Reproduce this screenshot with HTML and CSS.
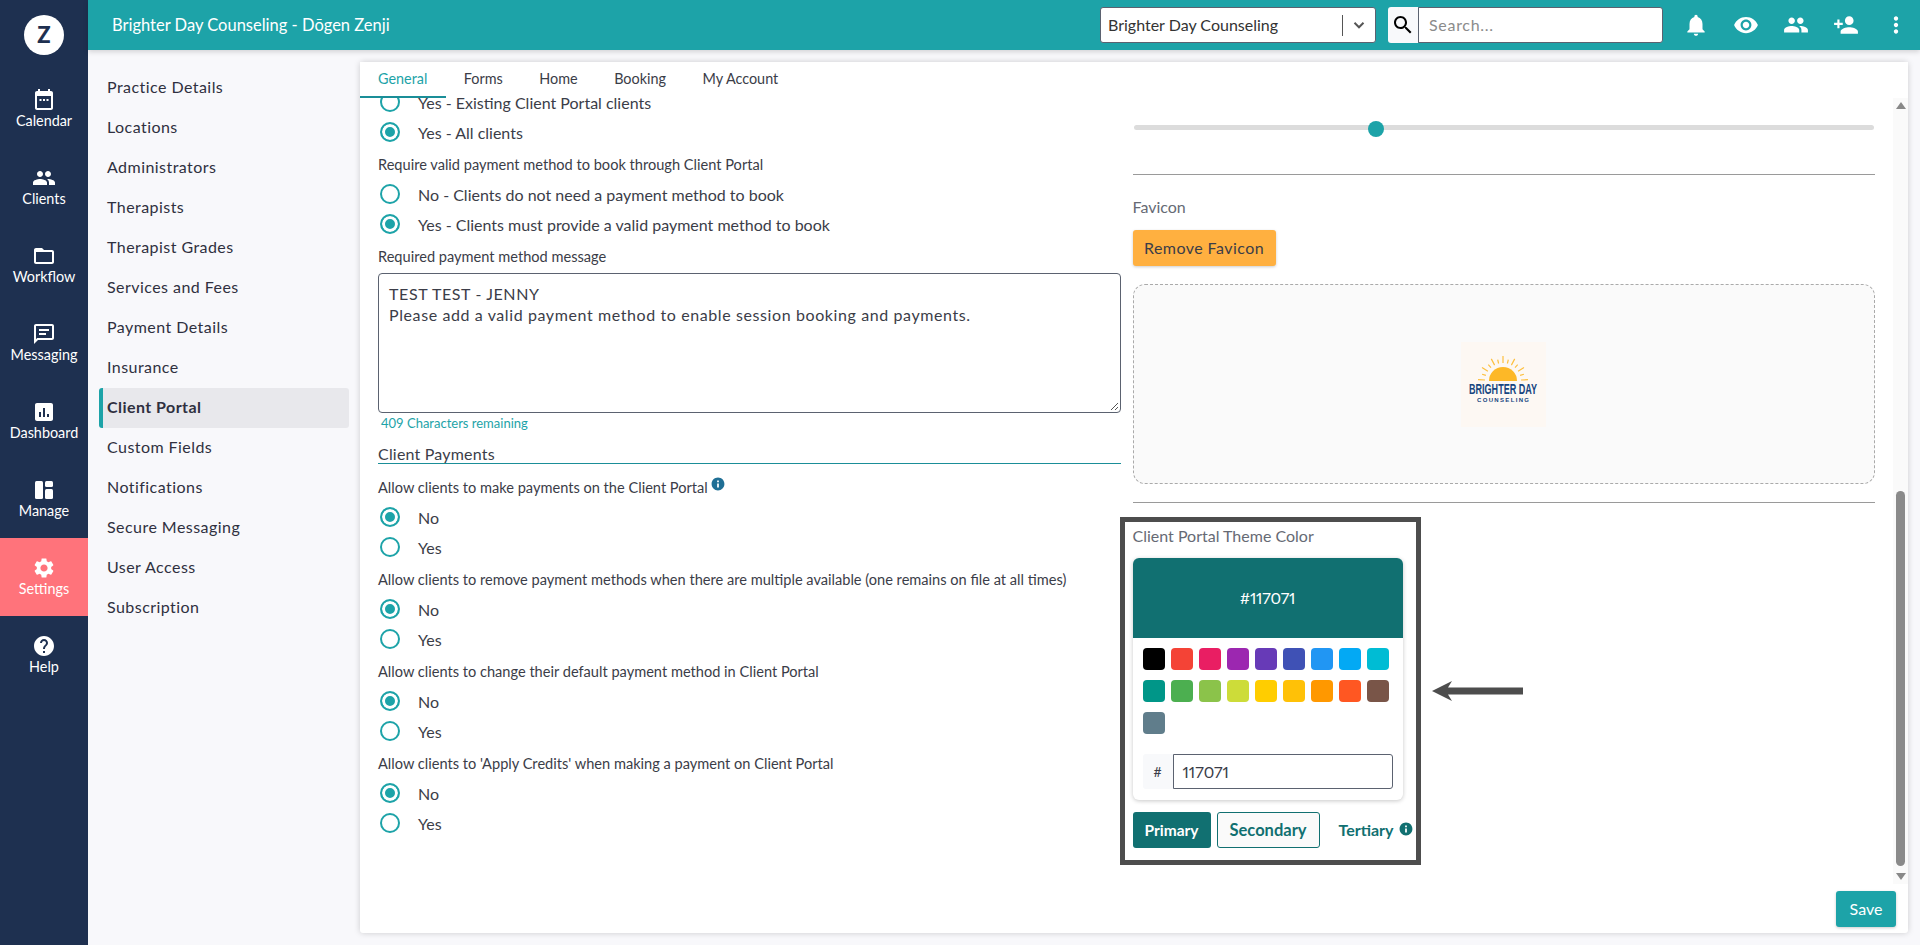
FILE: index.html
```html
<!DOCTYPE html>
<html>
<head>
  <title>Client Portal Settings</title>
  <link rel="stylesheet" href="styles.css">
</head>
<body>
  <nav class="rail">
    <div class="rail-logo"><span>Z</span></div>
    <a class="rail-item">
      <svg viewBox="0 0 24 24"><path d="M19 3h-1V1h-2v2H8V1H6v2H5c-1.1 0-2 .9-2 2v15c0 1.1.9 2 2 2h14c1.1 0 2-.9 2-2V5c0-1.1-.9-2-2-2zm0 17H5V8h14v12zM7.5 11h2v2h-2zm3.5 0h2v2h-2zm3.5 0h2v2h-2z"/></svg>
      Calendar
    </a>
    <a class="rail-item">
      <svg viewBox="0 0 24 24"><path d="M16 11c1.66 0 2.99-1.34 2.99-3S17.66 5 16 5c-1.66 0-3 1.34-3 3s1.34 3 3 3zm-8 0c1.66 0 2.99-1.34 2.99-3S9.66 5 8 5C6.34 5 5 6.34 5 8s1.34 3 3 3zm0 2c-2.33 0-7 1.17-7 3.5V19h14v-2.5c0-2.33-4.67-3.5-7-3.5zm8 0c-.29 0-.62.02-.97.05 1.16.84 1.97 1.97 1.97 3.45V19h6v-2.5c0-2.33-4.67-3.5-7-3.5z"/></svg>
      Clients
    </a>
    <a class="rail-item">
      <svg viewBox="0 0 24 24"><path d="M20 6h-8l-2-2H4c-1.1 0-1.99.9-1.99 2L2 18c0 1.1.9 2 2 2h16c1.1 0 2-.9 2-2V8c0-1.1-.9-2-2-2zm0 12H4V8h16v10z"/></svg>
      Workflow
    </a>
    <a class="rail-item">
      <svg viewBox="0 0 24 24"><path d="M20 2H4c-1.1 0-1.99.9-1.99 2L2 22l4-4h14c1.1 0 2-.9 2-2V4c0-1.1-.9-2-2-2zm0 14H5.17L4 17.17V4h16v12zM7 7h10v2H7zm0 4h7v2H7z"/></svg>
      Messaging
    </a>
    <a class="rail-item">
      <svg viewBox="0 0 24 24"><path d="M19 3H5c-1.1 0-2 .9-2 2v14c0 1.1.9 2 2 2h14c1.1 0 2-.9 2-2V5c0-1.1-.9-2-2-2zM9 17H7v-5h2v5zm4 0h-2V8h2v9zm4 0h-2v-3h2v3z"/></svg>
      Dashboard
    </a>
    <a class="rail-item">
      <svg viewBox="0 0 24 24"><rect x="3" y="3" width="8" height="18" rx="1.5"/><rect x="13" y="3" width="8" height="6" rx="1.5"/><rect x="13" y="11" width="8" height="10" rx="1.5"/></svg>
      Manage
    </a>
    <a class="rail-item rail-active">
      <svg viewBox="0 0 24 24"><path d="M19.14 12.94c.04-.3.06-.61.06-.94 0-.32-.02-.64-.07-.94l2.03-1.58c.18-.14.23-.41.12-.61l-1.92-3.32c-.12-.22-.37-.29-.59-.22l-2.39.96c-.5-.38-1.03-.7-1.62-.94l-.36-2.54c-.04-.24-.24-.41-.48-.41h-3.84c-.24 0-.43.17-.47.41l-.36 2.54c-.59.24-1.13.57-1.62.94l-2.39-.96c-.22-.08-.47 0-.59.22L2.74 8.87c-.12.21-.08.47.12.61l2.03 1.58c-.05.3-.09.63-.09.94s.02.64.07.94l-2.03 1.58c-.18.14-.23.41-.12.61l1.92 3.32c.12.22.37.29.59.22l2.39-.96c.5.38 1.03.7 1.62.94l.36 2.54c.05.24.24.41.48.41h3.84c.24 0 .44-.17.47-.41l.36-2.54c.59-.24 1.13-.56 1.62-.94l2.39.96c.22.08.47 0 .59-.22l1.92-3.32c.12-.22.07-.47-.12-.61l-2.01-1.58zM12 15.6c-1.98 0-3.6-1.62-3.6-3.6s1.62-3.6 3.6-3.6 3.6 1.62 3.6 3.6-1.62 3.6-3.6 3.6z"/></svg>
      Settings
    </a>
    <a class="rail-item">
      <svg viewBox="0 0 24 24"><path d="M12 2C6.48 2 2 6.48 2 12s4.48 10 10 10 10-4.48 10-10S17.52 2 12 2zm1 17h-2v-2h2v2zm2.07-7.75l-.9.92C13.45 12.9 13 13.5 13 15h-2v-.5c0-1.1.45-2.1 1.17-2.83l1.24-1.26c.37-.36.59-.86.59-1.41 0-1.1-.9-2-2-2s-2 .9-2 2H8c0-2.21 1.79-4 4-4s4 1.79 4 4c0 .88-.36 1.68-.93 2.25z"/></svg>
      Help
    </a>
  </nav>

  <div class="page">
    <header class="topbar">
      <div class="topbar-title">Brighter Day Counseling - Dōgen Zenji</div>
      <div class="practice-select">
        <span class="practice-name">Brighter Day Counseling</span>
        <span class="practice-sep"></span>
        <svg class="practice-caret" viewBox="0 0 24 24"><path d="M6 9l6 6 6-6" /></svg>
      </div>
      <div class="search">
        <span class="search-addon">
          <svg viewBox="0 0 24 24"><path d="M15.5 14h-.79l-.28-.27C15.41 12.59 16 11.11 16 9.5 16 5.91 13.09 3 9.5 3S3 5.91 3 9.5 5.91 16 9.5 16c1.61 0 3.09-.59 4.23-1.57l.27.28v.79l5 4.99L20.49 19l-4.99-5zm-6 0C7.01 14 5 11.99 5 9.5S7.01 5 9.5 5 14 7.01 14 9.5 11.99 14 9.5 14z"/></svg>
        </span>
        <span class="search-input">Search...</span>
      </div>
      <div class="top-icons">
        <svg viewBox="0 0 24 24"><path d="M12 22c1.1 0 2-.9 2-2h-4c0 1.1.9 2 2 2zm6-6v-5c0-3.07-1.64-5.64-4.5-6.32V4c0-.83-.67-1.5-1.5-1.5s-1.5.67-1.5 1.5v.68C7.63 5.36 6 7.92 6 11v5l-2 2v1h16v-1l-2-2z"/></svg>
        <svg viewBox="0 0 24 24"><path d="M12 4.5C7 4.5 2.73 7.61 1 12c1.73 4.39 6 7.5 11 7.5s9.27-3.11 11-7.5c-1.73-4.39-6-7.5-11-7.5zM12 17c-2.76 0-5-2.24-5-5s2.24-5 5-5 5 2.24 5 5-2.24 5-5 5zm0-8c-1.66 0-3 1.34-3 3s1.34 3 3 3 3-1.34 3-3-1.34-3-3-3z"/></svg>
        <svg viewBox="0 0 24 24"><path d="M16 11c1.66 0 2.99-1.34 2.99-3S17.66 5 16 5c-1.66 0-3 1.34-3 3s1.34 3 3 3zm-8 0c1.66 0 2.99-1.34 2.99-3S9.66 5 8 5C6.34 5 5 6.34 5 8s1.34 3 3 3zm0 2c-2.33 0-7 1.17-7 3.5V19h14v-2.5c0-2.33-4.67-3.5-7-3.5zm8 0c-.29 0-.62.02-.97.05 1.16.84 1.97 1.97 1.97 3.45V19h6v-2.5c0-2.33-4.67-3.5-7-3.5z"/></svg>
        <svg viewBox="0 0 24 24"><path d="M15 12c2.21 0 4-1.79 4-4s-1.79-4-4-4-4 1.79-4 4 1.79 4 4 4zm-9-2V7H4v3H1v2h3v3h2v-3h3v-2H6zm9 4c-2.67 0-8 1.34-8 4v2h16v-2c0-2.66-5.33-4-8-4z"/></svg>
        <svg viewBox="0 0 24 24"><path d="M12 8c1.1 0 2-.9 2-2s-.9-2-2-2-2 .9-2 2 .9 2 2 2zm0 2c-1.1 0-2 .9-2 2s.9 2 2 2 2-.9 2-2-.9-2-2-2zm0 6c-1.1 0-2 .9-2 2s.9 2 2 2 2-.9 2-2-.9-2-2-2z"/></svg>
      </div>
    </header>

    <div class="body-row">
      <aside class="subnav">
        <a>Practice Details</a>
        <a>Locations</a>
        <a>Administrators</a>
        <a>Therapists</a>
        <a>Therapist Grades</a>
        <a>Services and Fees</a>
        <a>Payment Details</a>
        <a>Insurance</a>
        <a class="subnav-active">Client Portal</a>
        <a>Custom Fields</a>
        <a>Notifications</a>
        <a>Secure Messaging</a>
        <a>User Access</a>
        <a>Subscription</a>
      </aside>

      <main class="card">
        <div class="tabs">
          <a class="tab tab-active">General</a>
          <a class="tab">Forms</a>
          <a class="tab">Home</a>
          <a class="tab">Booking</a>
          <a class="tab">My Account</a>
        </div>

        <div class="scroll-area">
          <div class="columns">
            <section class="col col-left">
              <div class="radio"><i></i>Yes - Existing Client Portal clients</div>
              <div class="radio on"><i></i>Yes - All clients</div>

              <div class="field-label label-tight">Require valid payment method to book through Client Portal</div>
              <div class="radio"><i></i>No - Clients do not need a payment method to book</div>
              <div class="radio on"><i></i>Yes - Clients must provide a valid payment method to book</div>

              <div class="field-label label-message">Required payment method message</div>
              <div class="textarea">TEST TEST - JENNY<br>Please add a valid payment method to enable session booking and payments.
                <svg class="resize-grip" viewBox="0 0 10 10"><path d="M9 2L2 9M9 6L6 9" /></svg>
              </div>
              <div class="char-count">409 Characters remaining</div>

              <h3 class="section-head">Client Payments</h3>

              <div class="field-label">Allow clients to make payments on the Client Portal
                <svg class="info-sup" viewBox="0 0 24 24"><path d="M12 1C5.9 1 1 5.9 1 12s4.9 11 11 11 11-4.9 11-11S18.1 1 12 1zm1.5 17h-3v-7h3v7zm0-9h-3V6h3v3z"/></svg>
              </div>
              <div class="radio on"><i></i>No</div>
              <div class="radio"><i></i>Yes</div>

              <div class="field-label">Allow clients to remove payment methods when there are multiple available (one remains on file at all times)</div>
              <div class="radio on"><i></i>No</div>
              <div class="radio"><i></i>Yes</div>

              <div class="field-label">Allow clients to change their default payment method in Client Portal</div>
              <div class="radio on"><i></i>No</div>
              <div class="radio"><i></i>Yes</div>

              <div class="field-label">Allow clients to 'Apply Credits' when making a payment on Client Portal</div>
              <div class="radio on"><i></i>No</div>
              <div class="radio"><i></i>Yes</div>
            </section>

            <section class="col col-right">
              <div class="slider"><span class="slider-thumb" style="left: 32.7%"></span></div>
              <hr class="rule rule-top">
              <div class="muted-label">Favicon</div>
              <button class="btn-warn">Remove Favicon</button>
              <div class="dropzone">
                <svg class="favicon" viewBox="0 0 85 85">
                  <rect width="85" height="85" fill="#fdf8f3" />
                  <path class="sun" d="M28 39a14 14 0 0 1 28 0z" />
                  <path class="rays" d="M60 38L67 37.7M24 38L17 37.7M59.1 33.4L62.9 32.2M24.9 33.4L21.1 32.2M57.1 29.2L63 25.4M26.9 29.2L21 25.4M54 25.6L56.7 22.7M30 25.6L27.3 22.7M50.4 23.1L53.7 16.9M33.6 23.1L30.3 16.9M46.4 21.5L47.3 17.7M37.6 21.5L36.7 17.7M42 21L42 14" />
                  <text class="logo-big" x="8" y="52" textLength="68" lengthAdjust="spacingAndGlyphs">BRIGHTER DAY</text>
                  <text class="logo-small" x="16" y="60" textLength="52" lengthAdjust="spacing">COUNSELING</text>
                </svg>
              </div>
              <hr class="rule rule-bottom">
              <div class="muted-label theme-label">Client Portal Theme Color</div>
              <div class="picker">
                <div class="picker-head">#117071</div>
                <div class="swatches">
                  <span style="background: #000000"></span>
                  <span style="background: #f44336"></span>
                  <span style="background: #e91e63"></span>
                  <span style="background: #9c27b0"></span>
                  <span style="background: #673ab7"></span>
                  <span style="background: #3f51b5"></span>
                  <span style="background: #2196f3"></span>
                  <span style="background: #03a9f4"></span>
                  <span style="background: #00bcd4"></span>
                  <span style="background: #009688"></span>
                  <span style="background: #4caf50"></span>
                  <span style="background: #8bc34a"></span>
                  <span style="background: #cddc39"></span>
                  <span style="background: #ffcd00"></span>
                  <span style="background: #ffc107"></span>
                  <span style="background: #ff9800"></span>
                  <span style="background: #ff5722"></span>
                  <span style="background: #795548"></span>
                  <span style="background: #607d8b"></span>
                </div>
                <div class="hex-row">
                  <span class="hex-addon">#</span>
                  <span class="hex-input">117071</span>
                </div>
              </div>
              <div class="theme-btns">
                <button class="theme-btn theme-primary">Primary</button>
                <button class="theme-btn theme-secondary">Secondary</button>
                <span class="theme-tertiary">Tertiary
                  <svg viewBox="0 0 24 24"><path d="M12 1C5.9 1 1 5.9 1 12s4.9 11 11 11 11-4.9 11-11S18.1 1 12 1zm1.5 17h-3v-7h3v7zm0-9h-3V6h3v3z"/></svg>
                </span>
              </div>
            </section>
          </div>

          <div class="scrollbar">
            <span class="arrow-up"></span>
            <span class="scroll-thumb"></span>
            <span class="arrow-down"></span>
          </div>
        </div>

        <footer class="card-foot">
          <button class="btn-save">Save</button>
        </footer>
      </main>
    </div>
  </div>

  <!-- annotation drawn over the screenshot -->
  <div class="note-frame"></div>
  <svg class="note-arrow" viewBox="0 0 91 20"><path d="M0 10L20 0L16 6.5H91V13.5H16L20 20z"/></svg>
</body>
</html>
```

FILE: styles.css
```css
* {
  box-sizing: border-box;
}
html, body {
  width: 100%;
  height: 100%;
  margin: 0;
  padding: 0;
  overflow: hidden;
}
body {
  display: flex;
  position: relative;
  font-family: "Lato", "Liberation Sans", sans-serif;
  font-size: 16px;
  color: #3b3d48;
  background: #f8f8fb;
}

/* left rail */
.rail {
  width: 88px;
  flex: none;
  background: #1e3050;
  color: #fff;
}
.rail-logo {
  height: 70px;
  display: flex;
  align-items: center;
  justify-content: center;
}
.rail-logo span {
  width: 40px;
  height: 40px;
  border-radius: 50%;
  background: #fff;
  color: #1e3050;
  font-size: 22px;
  font-weight: 900;
  text-align: center;
  line-height: 40px;
}
.rail-item {
  display: flex;
  flex-direction: column;
  align-items: center;
  height: 78px;
  padding-top: 18px;
  font-size: 14.4px;
  line-height: 18px;
}
.rail-item svg {
  width: 24px;
  height: 24px;
  fill: #fff;
}
.rail-active {
  background: #ff737b;
}

/* top bar */
.page {
  flex: 1;
  display: flex;
  flex-direction: column;
  min-width: 0;
}
.topbar {
  height: 50px;
  flex: none;
  display: flex;
  align-items: center;
  padding: 0 11px 0 24px;
  background: #1da3a8;
  color: #fff;
  box-shadow: 0 2px 5px rgba(0, 0, 0, 0.15);
  position: relative;
  z-index: 2;
}
.topbar-title {
  flex: 1;
  font-size: 16.5px;
}
.practice-select {
  width: 276px;
  height: 36px;
  display: flex;
  align-items: center;
  padding-left: 7px;
  background: #fff;
  border: 1px solid #5b6270;
  border-radius: 3px;
  color: #333;
  font-size: 16px;
}
.practice-name {
  flex: 1;
  margin-top: -2px;
}
.practice-sep {
  width: 1px;
  height: 21px;
  background: #555;
}
.practice-caret {
  width: 18px;
  height: 18px;
  margin: 0 7px;
  fill: none;
  stroke: #555;
  stroke-width: 2.6;
}
.search {
  display: flex;
  height: 36px;
  margin-left: 12px;
}
.search-addon {
  width: 30px;
  display: flex;
  align-items: center;
  justify-content: center;
  background: #f8f9fb;
  border-radius: 3px 0 0 3px;
}
.search-addon svg {
  width: 24px;
  height: 24px;
}
.search-input {
  width: 245px;
  padding-left: 10px;
  background: #fff;
  border: 1px solid #5b6270;
  border-radius: 0 3px 3px 0;
  color: #8b8b8b;
  line-height: 34px;
  letter-spacing: 0.7px;
}
.top-icons {
  display: flex;
  margin-left: 20px;
  gap: 24px;
}
.top-icons svg {
  width: 26px;
  height: 26px;
  fill: #fff;
}

/* settings list */
.body-row {
  flex: 1;
  display: flex;
  min-height: 0;
}
.subnav {
  width: 272px;
  flex: none;
  padding: 18px 0 0 11px;
}
.subnav a {
  display: block;
  width: 250px;
  height: 40px;
  padding-left: 8px;
  line-height: 38px;
  font-size: 16px;
  letter-spacing: 0.45px;
  color: #2f3040;
}
.subnav .subnav-active {
  background: #e8e8ec;
  border-left: 4px solid #1da3a8;
  border-radius: 3px;
  padding-left: 4px;
  font-weight: 700;
}

/* main card */
.card {
  flex: 1;
  margin: 12px 12px 12px 0;
  display: flex;
  flex-direction: column;
  background: #fff;
  border-radius: 3px;
  box-shadow: 0 0 6px rgba(0, 0, 0, 0.18);
  min-width: 0;
}
.tabs {
  height: 36px;
  flex: none;
  display: flex;
  position: relative;
  z-index: 1;
  background: #fff;
}
.tab {
  padding: 0 18.5px 0 18px;
  line-height: 34px;
  font-size: 14.4px;
  color: #3b3d48;
}
.tab-active {
  color: #1da3a8;
  border-bottom: 2px solid #1a8e98;
}
.scroll-area {
  flex: 1;
  display: flex;
  min-height: 0;
  overflow: hidden;
}
.columns {
  flex: 1;
  display: flex;
  gap: 12px;
  padding: 0 18px;
  min-width: 0;
}
.col {
  flex: 1;
  min-width: 0;
}
.col-left {
  margin-top: -11px; /* scrolled position */
}

.radio {
  height: 30px;
  display: flex;
  align-items: center;
  padding-left: 2px;
  font-size: 16px;
}
.radio i {
  width: 20px;
  height: 20px;
  margin-right: 18px;
  border: 2px solid #1da3a8;
  border-radius: 50%;
}
.radio.on i {
  background: #1da3a8;
  box-shadow: inset 0 0 0 3px #fff;
}
.field-label {
  height: 20px;
  margin: 8px 0 4px;
  font-size: 14.6px;
  line-height: 20px;
}
.field-label.label-message {
  margin: 8px 0 6px;
}
.info-sup {
  width: 14px;
  height: 14px;
  margin-top: -1px;
  fill: #1f6f95;
  vertical-align: top;
}
.textarea {
  position: relative;
  height: 140px;
  padding: 9px 10px;
  border: 1px solid #5b6270;
  border-radius: 4px;
  font-size: 16px;
  letter-spacing: 0.6px;
  line-height: 21px;
}
.resize-grip {
  position: absolute;
  right: 1px;
  bottom: 1px;
  width: 10px;
  height: 10px;
  fill: none;
  stroke: #555;
}
.char-count {
  padding: 2px 0 0 3px;
  font-size: 13px;
  line-height: 16px;
  color: #1da3a8;
}
.section-head {
  margin: 13px 0 14px;
  font-size: 16px;
  letter-spacing: 0.2px;
  font-weight: 400;
  line-height: 19px;
  border-bottom: 1px solid #1a8e98;
}

/* right column */
.slider {
  position: relative;
  height: 5px;
  margin: 27px 1px 44px;
  background: #dcdcdc;
  border-radius: 3px;
}
.slider-thumb {
  position: absolute;
  top: -4px;
  width: 16px;
  height: 16px;
  margin-left: -8px;
  background: #1da3a8;
  border-radius: 50%;
}
.rule {
  margin: 0;
  border: 0;
  border-top: 1px solid #9a9a9a;
}
.muted-label {
  font-size: 16px;
  line-height: 20px;
  color: #666a74;
}
.rule-top {
  margin-bottom: 22px;
}
.btn-warn {
  display: block;
  width: 143px;
  height: 36px;
  margin-top: 13px;
  padding: 0 0 2px;
  border: 0;
  border-radius: 3px;
  background: #ffb040;
  color: #3b3d48;
  font: 16px "Lato", "Liberation Sans", sans-serif;
  letter-spacing: 0.45px;
  box-shadow: 0 1px 3px rgba(0, 0, 0, 0.2);
}
.dropzone {
  height: 200px;
  margin-top: 18px;
  display: flex;
  align-items: center;
  justify-content: center;
  background: #fafafa;
  border: 1px dashed #aaa;
  border-radius: 12px;
}
.favicon {
  width: 85px;
  height: 85px;
}
.sun {
  fill: #fdb827;
}
.rays {
  fill: none;
  stroke: #fdc040;
  stroke-width: 1.2;
}
.logo-big {
  font: 700 14px "Liberation Sans", sans-serif;
  fill: #16457f;
}
.logo-small {
  font: 700 6px "Liberation Sans", sans-serif;
  fill: #16457f;
}
.rule-bottom {
  margin-top: 18px;
}
.theme-label {
  margin-top: 23px;
}
.picker {
  width: 270px;
  height: 242px;
  margin-top: 12px;
  background: #fff;
  border-radius: 6px;
  box-shadow: 0 1px 4px rgba(0, 0, 0, 0.22);
}
.picker-head {
  height: 80px;
  background: #117071;
  border-radius: 6px 6px 0 0;
  color: #fff;
  font-size: 16px;
  font-variant-numeric: proportional-nums;
  letter-spacing: -0.2px;
  line-height: 80px;
  text-align: center;
}
.swatches {
  display: flex;
  flex-wrap: wrap;
  align-content: flex-start;
  gap: 10px 6px;
  height: 116px;
  padding: 10px 10px 0;
}
.swatches span {
  width: 22px;
  height: 22px;
  border-radius: 4px;
}
.hex-row {
  display: flex;
  height: 35px;
  margin: 0 10px;
}
.hex-addon {
  width: 30px;
  background: #f8f9fb;
  border-radius: 3px 0 0 3px;
  line-height: 35px;
  text-align: center;
  font-size: 14px;
}
.hex-input {
  flex: 1;
  padding-left: 9px;
  border: 1px solid #5b6270;
  border-radius: 0 3px 3px 0;
  line-height: 33px;
  font-size: 16px;
  font-variant-numeric: proportional-nums;
}
.theme-btns {
  display: flex;
  align-items: center;
  gap: 6px;
  margin-top: 12px;
}
.theme-btn {
  height: 36px;
  padding: 0;
  border-radius: 3px;
  font: 700 15.5px "Lato", "Liberation Sans", sans-serif;
}
.theme-primary {
  width: 78px;
  border: 0;
  background: #117071;
  color: #fff;
}
.theme-secondary {
  width: 103px;
  border: 1px solid #117071;
  background: #fafafa;
  color: #117071;
  font-size: 16.5px;
}
.theme-tertiary {
  display: flex;
  align-items: center;
  gap: 5px;
  margin-left: 13px;
  margin-top: -2px;
  font-size: 16px;
  font-weight: 700;
  color: #117071;
}
.theme-tertiary svg {
  width: 14px;
  height: 14px;
  fill: #117071;
}

/* fake scrollbar */
.scrollbar {
  width: 15px;
  flex: none;
  display: flex;
  flex-direction: column;
  align-items: center;
  background: #fafafa;
}
.arrow-up {
  margin-top: 4px;
  border: 5px solid transparent;
  border-top: 0;
  border-bottom: 7px solid #888;
}
.scroll-thumb {
  width: 9px;
  height: 375px;
  margin-top: auto;
  background: #8a8a8a;
  border-radius: 5px;
}
.arrow-down {
  margin: 7px 0 4px;
  border: 5px solid transparent;
  border-bottom: 0;
  border-top: 7px solid #888;
}

.card-foot {
  height: 49px;
  flex: none;
  display: flex;
  justify-content: flex-end;
  padding: 7px 12px 0 0;
}
.btn-save {
  width: 60px;
  height: 36px;
  padding: 0 0 2px;
  border: 0;
  border-radius: 3px;
  background: #1da3a8;
  color: #fff;
  font: 16px "Lato", "Liberation Sans", sans-serif;
  box-shadow: 0 1px 3px rgba(0, 0, 0, 0.2);
}

/* annotation */
.note-frame {
  position: absolute;
  left: 1120px;
  top: 517px;
  width: 301px;
  height: 348px;
  border: 5px solid #4d4d4d;
}
.note-arrow {
  position: absolute;
  left: 1432px;
  top: 681px;
  width: 91px;
  height: 20px;
  fill: #4d4d4d;
}
```
